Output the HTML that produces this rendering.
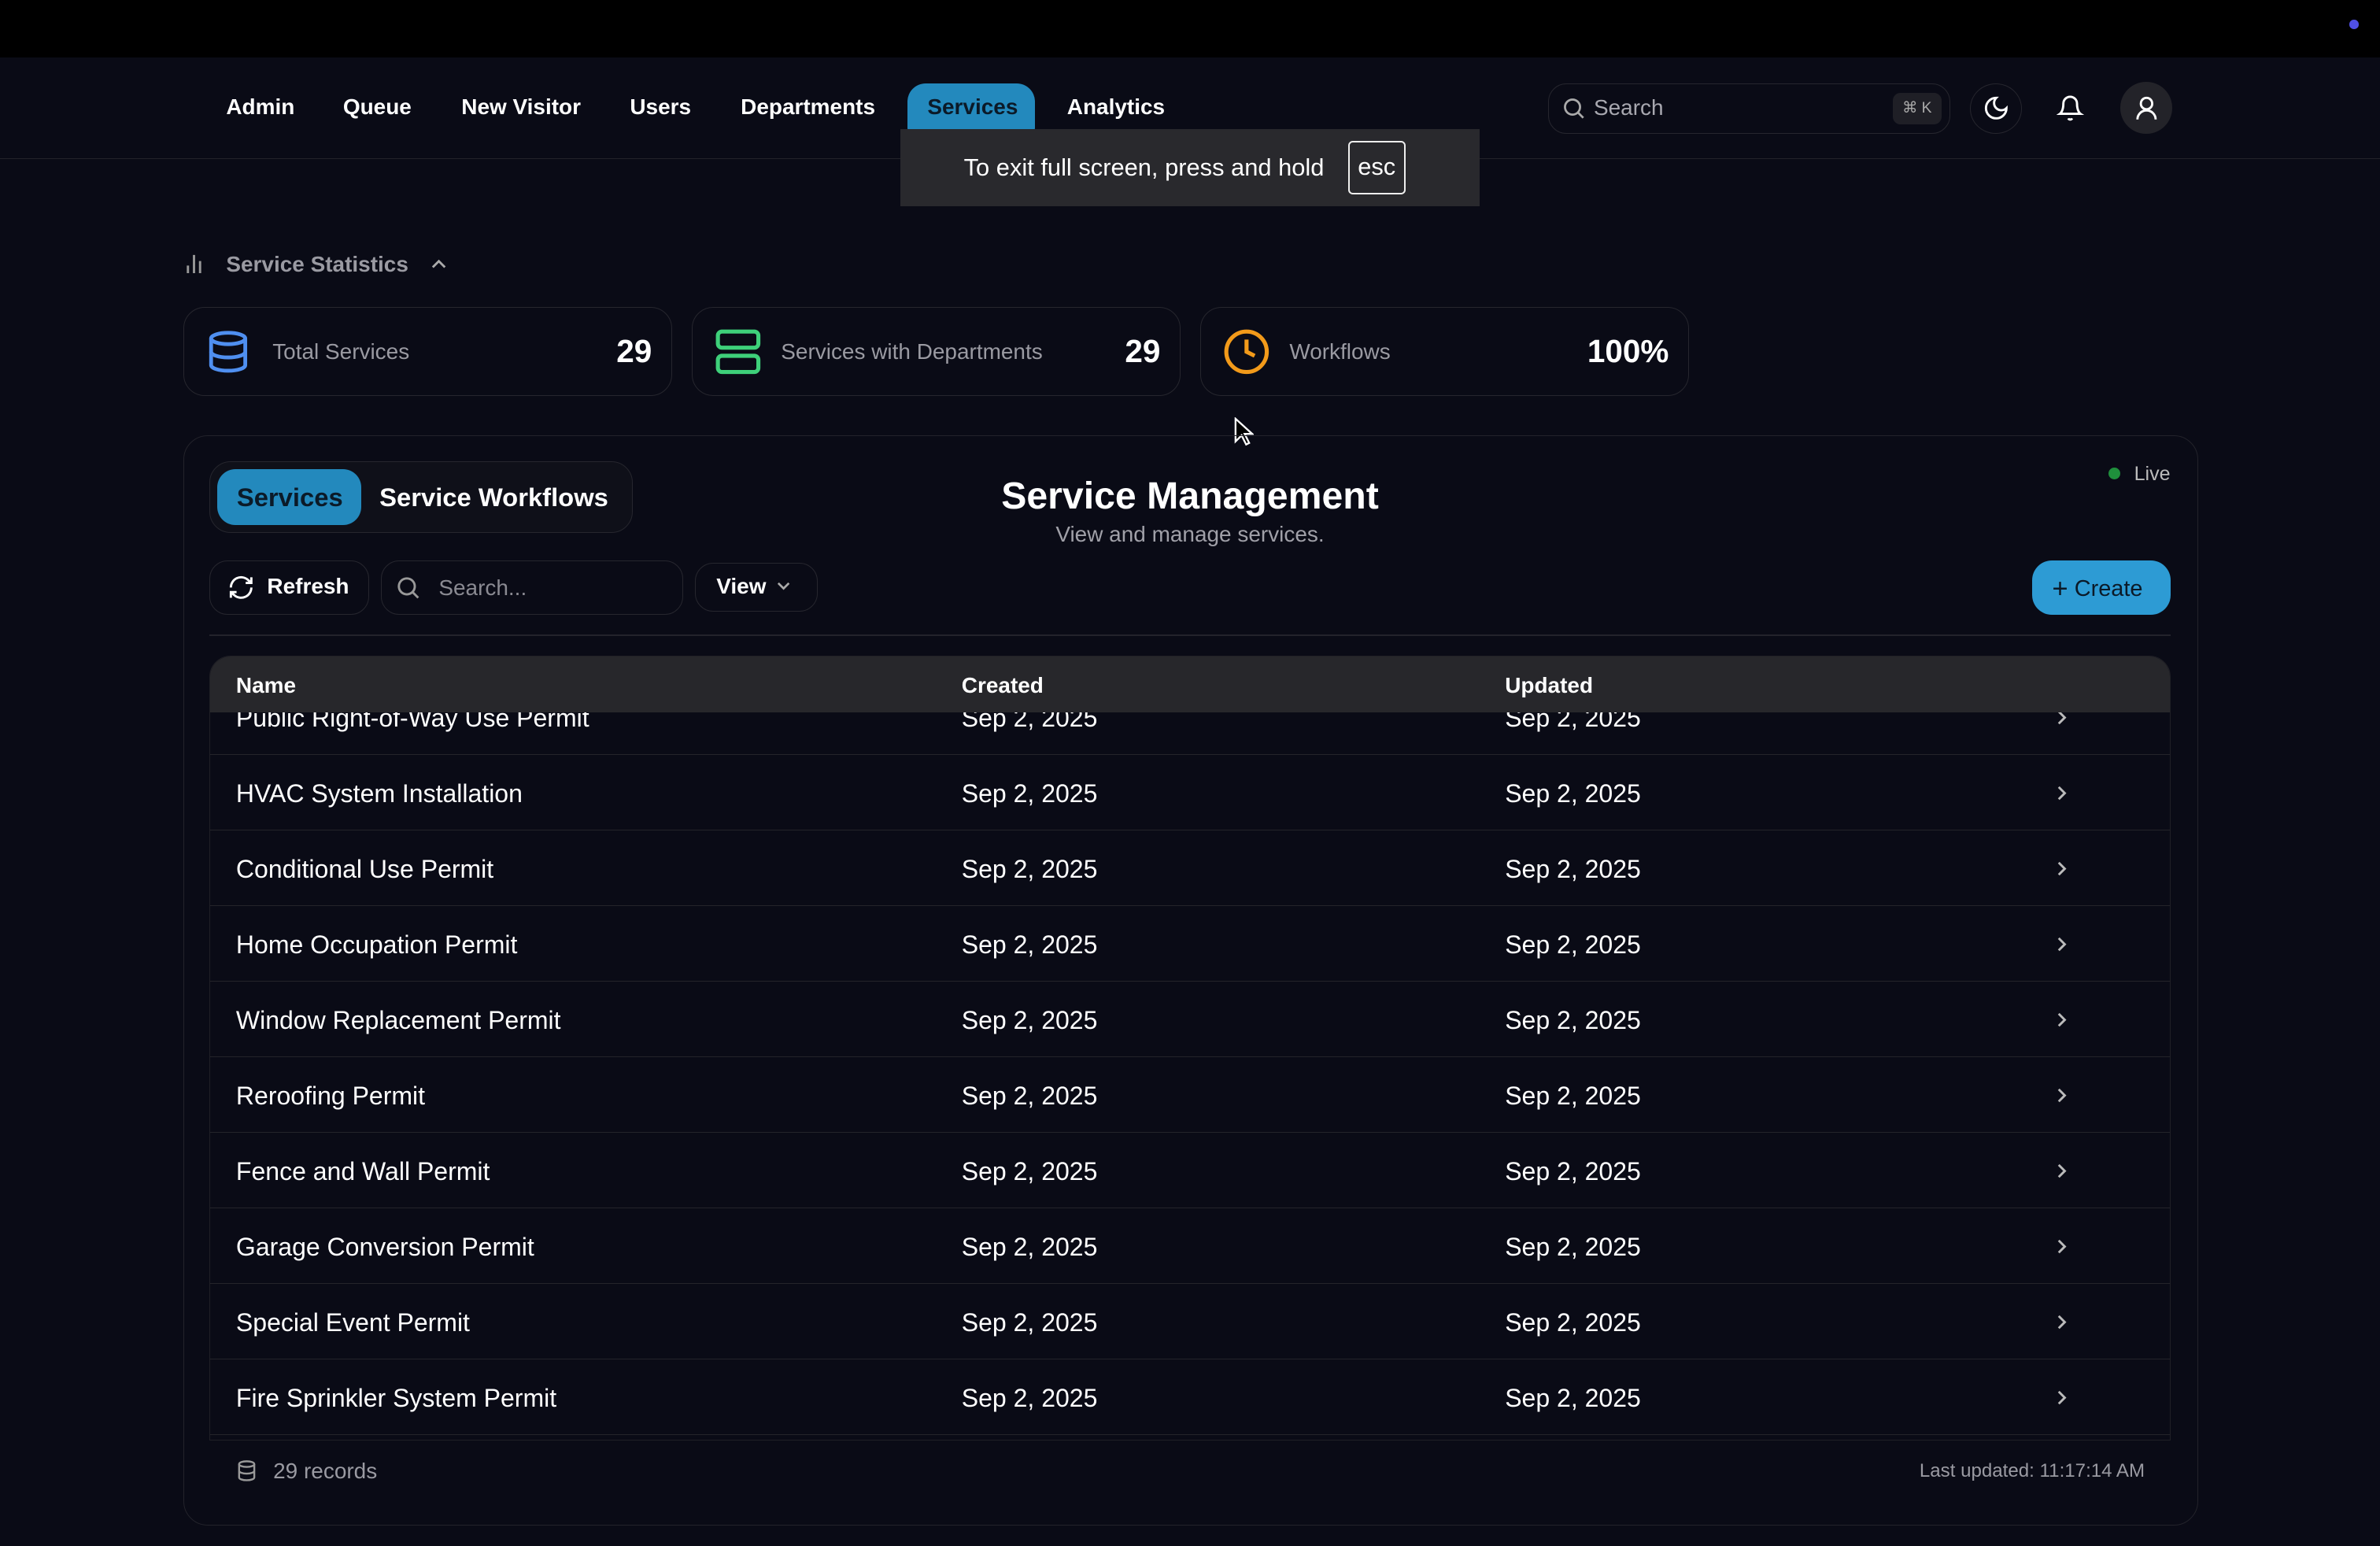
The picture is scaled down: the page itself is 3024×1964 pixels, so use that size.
<!DOCTYPE html>
<html><head><meta charset="utf-8"><style>
*{box-sizing:border-box;margin:0;padding:0}
html,body{width:3024px;height:1964px;overflow:hidden;background:#0a0b16}
#r{zoom:1.928571;width:1568px;height:1019px;position:relative;background:#0a0b16;font-family:"Liberation Sans",sans-serif;color:#fff;overflow:hidden}
.a{position:absolute}
.nav{font-size:14.5px;font-weight:bold;top:62px}
.card{position:absolute;top:202px;height:59px;width:322px;border:1px solid #26262e;border-radius:14px}
.card .l{position:absolute;left:58px;top:21px;font-size:14.5px;color:#9a9aa2}
.card .v{position:absolute;right:13px;top:17px;font-size:21px;font-weight:bold}
.card svg{position:absolute;left:14px;top:13px}
.row{position:relative;height:49.8px;border-bottom:1px solid #24242a;font-size:16.6px}
.row span{position:absolute;top:16px}
.row .c1{left:17px}.row .c2{left:495px}.row .c3{left:853px}
.row svg{position:absolute;left:1215px;top:19px}
</style></head><body><div id="r">
<div class="a" style="left:0;top:0;width:1568px;height:38px;background:#000"></div>
<div class="a" style="left:1548px;top:13px;width:6px;height:6px;border-radius:50%;background:#4f4fe6"></div>
<div class="a" style="left:0;top:104px;width:1568px;height:1px;background:#23232a"></div>
<div class="a nav" style="left:149px">Admin</div>
<div class="a nav" style="left:226px">Queue</div>
<div class="a nav" style="left:304px">New Visitor</div>
<div class="a nav" style="left:415px">Users</div>
<div class="a nav" style="left:488px">Departments</div>
<div class="a" style="left:598px;top:55px;width:84px;height:33px;border-radius:12px 12px 4px 4px;background:#2389bd"></div>
<div class="a nav" style="left:611px;color:#0b1a28">Services</div>
<div class="a nav" style="left:703px">Analytics</div>
<div class="a" style="left:593px;top:85px;width:382px;height:51px;background:#29292d"></div>
<div class="a" style="left:635px;top:101px;font-size:16px">To exit full screen, press and hold</div>
<div class="a" style="left:888px;top:93px;width:38px;height:35px;border:1.5px solid #eee;border-radius:3px;font-size:16px;text-align:center;line-height:32px">esc</div>
<div class="a" style="left:1020px;top:55px;width:265px;height:33px;border:1px solid #26262e;border-radius:12px"></div>
<svg class="a" style="left:1028px;top:63px" width="17" height="17" viewBox="0 0 24 24" fill="none" stroke="#aaa" stroke-width="2"><circle cx="11" cy="11" r="7"/><path d="M21 21l-5-5"/></svg>
<div class="a" style="left:1050px;top:63px;font-size:14.5px;color:#a8a8b0">Search</div>
<div class="a" style="left:1247px;top:61px;width:32px;height:21px;background:#1f1f26;border-radius:5px;font-size:10px;color:#aaa;text-align:center;line-height:21px">⌘ K</div>
<div class="a" style="left:1298px;top:55px;width:34px;height:33px;border:1px solid #26262e;border-radius:50%"></div>
<svg class="a" style="left:1306px;top:62px" width="18" height="18" viewBox="0 0 24 24" fill="none" stroke="#fff" stroke-width="2"><path d="M12 3a6 6 0 0 0 9 9 9 9 0 1 1-9-9z"/></svg>
<svg class="a" style="left:1355px;top:62px" width="18" height="18" viewBox="0 0 24 24" fill="none" stroke="#fff" stroke-width="2"><path d="M6 8a6 6 0 0 1 12 0c0 7 3 9 3 9H3s3-2 3-9"/><path d="M10.3 21a1.9 1.9 0 0 0 3.4 0"/></svg>
<div class="a" style="left:1397px;top:54px;width:34px;height:34px;border-radius:50%;background:#232329"></div>
<svg class="a" style="left:1405px;top:62px" width="18" height="18" viewBox="0 0 24 24" fill="none" stroke="#fff" stroke-width="2"><circle cx="12" cy="8" r="5"/><path d="M4 22a8 8 0 0 1 16 0"/></svg>

<svg class="a" style="left:121px;top:166px" width="14" height="15" viewBox="0 0 14 15" stroke="#999" stroke-width="1.5"><path d="M3 14V9M7 14V2M11 14V6"/></svg>
<div class="a" style="left:149px;top:166px;font-size:14.5px;font-weight:bold;color:#9a9aa2">Service Statistics</div>
<svg class="a" style="left:283px;top:169px" width="12" height="10" viewBox="0 0 12 10" fill="none" stroke="#aaa" stroke-width="1.5"><path d="M2 7l4-4 4 4"/></svg>

<div class="card" style="left:121px"><svg width="30" height="32" viewBox="0 0 24 24" fill="none" stroke="#4f8ff0" stroke-width="2"><ellipse cx="12" cy="5" rx="9" ry="3"/><path d="M3 5v14c0 1.7 4 3 9 3s9-1.3 9-3V5"/><path d="M3 12c0 1.7 4 3 9 3s9-1.3 9-3"/></svg><div class="l">Total Services</div><div class="v">29</div></div>
<div class="card" style="left:456px"><svg width="32" height="32" viewBox="0 0 24 24" fill="none" stroke="#3ed07a" stroke-width="2"><rect x="2" y="2" width="20" height="8" rx="2"/><rect x="2" y="14" width="20" height="8" rx="2"/><path d="M6 6h.01M6 18h.01"/></svg><div class="l">Services with Departments</div><div class="v">29</div></div>
<div class="card" style="left:791px"><svg width="32" height="32" viewBox="0 0 24 24" fill="none" stroke="#f29a1a" stroke-width="2"><circle cx="12" cy="12" r="10"/><path d="M12 6v6l4 2"/></svg><div class="l">Workflows</div><div class="v">100%</div></div>

<svg class="a" style="left:812px;top:275px" width="14" height="20" viewBox="0 0 14 20"><path d="M2 1v15l4-4 3 6 2-1-3-6h5z" fill="#000" stroke="#fff" stroke-width="1.2"/></svg>

<div class="a" style="left:121px;top:287px;width:1327px;height:718px;border:1px solid #23232b;border-radius:16px"></div>
<div class="a" style="left:138px;top:304px;width:279px;height:47px;border:1px solid #26262e;border-radius:14px;background:#0f1019"></div>
<div class="a" style="left:143px;top:309px;width:95px;height:37px;border-radius:12px;background:#2389bd"></div>
<div class="a" style="left:156px;top:318px;font-size:17px;font-weight:bold;color:#0b1a28">Services</div>
<div class="a" style="left:250px;top:318px;font-size:17px;font-weight:bold">Service Workflows</div>
<div class="a" style="left:584px;top:312px;width:400px;text-align:center;font-size:25px;font-weight:bold">Service Management</div>
<div class="a" style="left:584px;top:344px;width:400px;text-align:center;font-size:14.5px;color:#a0a0a8">View and manage services.</div>
<div class="a" style="left:1389px;top:308px;width:8px;height:8px;border-radius:50%;background:#1f8f3c"></div>
<div class="a" style="left:1406px;top:305px;font-size:13px;color:#bbb">Live</div>

<div class="a" style="left:138px;top:369px;width:105px;height:36px;border:1px solid #26262e;border-radius:12px"></div>
<svg class="a" style="left:150px;top:378px" width="18" height="18" viewBox="0 0 24 24" fill="none" stroke="#fff" stroke-width="2"><path d="M3 12a9 9 0 0 1 15-6.7L21 8M21 3v5h-5M21 12a9 9 0 0 1-15 6.7L3 16M3 21v-5h5"/></svg>
<div class="a" style="left:176px;top:378px;font-size:14.5px;font-weight:bold">Refresh</div>
<div class="a" style="left:251px;top:369px;width:199px;height:36px;border:1px solid #26262e;border-radius:12px"></div>
<svg class="a" style="left:260px;top:378px" width="18" height="18" viewBox="0 0 24 24" fill="none" stroke="#999" stroke-width="2"><circle cx="11" cy="11" r="7"/><path d="M21 21l-5-5"/></svg>
<div class="a" style="left:289px;top:379px;font-size:14.5px;color:#8a8a92">Search...</div>
<div class="a" style="left:458px;top:371px;width:81px;height:32px;border:1px solid #26262e;border-radius:12px"></div>
<div class="a" style="left:472px;top:378px;font-size:14.5px;font-weight:bold">View</div>
<svg class="a" style="left:511px;top:382px" width="11" height="8" viewBox="0 0 11 8" fill="none" stroke="#aaa" stroke-width="1.4"><path d="M2 2l3.5 3.5L9 2"/></svg>
<div class="a" style="left:1339px;top:369px;width:91px;height:36px;border-radius:13px;background:#2d9bd4"></div>
<div class="a" style="left:1352px;top:377px;font-size:15px;color:#0b1a28"><span style="font-size:18px;position:relative;top:1px">+</span> Create</div>
<div class="a" style="left:138px;top:418px;width:1292px;height:1px;background:#23232b"></div>

<div class="a" style="left:138px;top:432px;width:1292px;height:517px;border:1px solid #202026;border-radius:14px 14px 0 0;overflow:hidden">
<div style="position:absolute;left:0;top:15px;width:100%">
<div class="row"><span class="c1">Public Right-of-Way Use Permit</span><span class="c2">Sep 2, 2025</span><span class="c3">Sep 2, 2025</span><svg width="10" height="12" viewBox="0 0 10 12" fill="none" stroke="#bbb" stroke-width="1.5"><path d="M3 2l4 4-4 4"/></svg></div>
<div class="row"><span class="c1">HVAC System Installation</span><span class="c2">Sep 2, 2025</span><span class="c3">Sep 2, 2025</span><svg width="10" height="12" viewBox="0 0 10 12" fill="none" stroke="#bbb" stroke-width="1.5"><path d="M3 2l4 4-4 4"/></svg></div>
<div class="row"><span class="c1">Conditional Use Permit</span><span class="c2">Sep 2, 2025</span><span class="c3">Sep 2, 2025</span><svg width="10" height="12" viewBox="0 0 10 12" fill="none" stroke="#bbb" stroke-width="1.5"><path d="M3 2l4 4-4 4"/></svg></div>
<div class="row"><span class="c1">Home Occupation Permit</span><span class="c2">Sep 2, 2025</span><span class="c3">Sep 2, 2025</span><svg width="10" height="12" viewBox="0 0 10 12" fill="none" stroke="#bbb" stroke-width="1.5"><path d="M3 2l4 4-4 4"/></svg></div>
<div class="row"><span class="c1">Window Replacement Permit</span><span class="c2">Sep 2, 2025</span><span class="c3">Sep 2, 2025</span><svg width="10" height="12" viewBox="0 0 10 12" fill="none" stroke="#bbb" stroke-width="1.5"><path d="M3 2l4 4-4 4"/></svg></div>
<div class="row"><span class="c1">Reroofing Permit</span><span class="c2">Sep 2, 2025</span><span class="c3">Sep 2, 2025</span><svg width="10" height="12" viewBox="0 0 10 12" fill="none" stroke="#bbb" stroke-width="1.5"><path d="M3 2l4 4-4 4"/></svg></div>
<div class="row"><span class="c1">Fence and Wall Permit</span><span class="c2">Sep 2, 2025</span><span class="c3">Sep 2, 2025</span><svg width="10" height="12" viewBox="0 0 10 12" fill="none" stroke="#bbb" stroke-width="1.5"><path d="M3 2l4 4-4 4"/></svg></div>
<div class="row"><span class="c1">Garage Conversion Permit</span><span class="c2">Sep 2, 2025</span><span class="c3">Sep 2, 2025</span><svg width="10" height="12" viewBox="0 0 10 12" fill="none" stroke="#bbb" stroke-width="1.5"><path d="M3 2l4 4-4 4"/></svg></div>
<div class="row"><span class="c1">Special Event Permit</span><span class="c2">Sep 2, 2025</span><span class="c3">Sep 2, 2025</span><svg width="10" height="12" viewBox="0 0 10 12" fill="none" stroke="#bbb" stroke-width="1.5"><path d="M3 2l4 4-4 4"/></svg></div>
<div class="row"><span class="c1">Fire Sprinkler System Permit</span><span class="c2">Sep 2, 2025</span><span class="c3">Sep 2, 2025</span><svg width="10" height="12" viewBox="0 0 10 12" fill="none" stroke="#bbb" stroke-width="1.5"><path d="M3 2l4 4-4 4"/></svg></div>
</div>
<div style="position:absolute;left:0;top:0;width:100%;height:37px;background:#27272b;font-size:14.5px;font-weight:bold">
<span style="position:absolute;left:17px;top:11px">Name</span><span style="position:absolute;left:495px;top:11px">Created</span><span style="position:absolute;left:853px;top:11px">Updated</span></div>
</div>

<svg class="a" style="left:155px;top:961px" width="15" height="16" viewBox="0 0 24 24" fill="none" stroke="#999" stroke-width="2"><ellipse cx="12" cy="5" rx="8" ry="3"/><path d="M4 5v14c0 1.7 3.6 3 8 3s8-1.3 8-3V5M4 12c0 1.7 3.6 3 8 3s8-1.3 8-3"/></svg>
<div class="a" style="left:180px;top:961px;font-size:14.5px;color:#9a9aa2">29 records</div>
<div class="a" style="left:1200px;top:962px;width:213px;text-align:right;font-size:12.5px;color:#9a9aa2">Last updated: 11:17:14 AM</div>
</div></body></html>
